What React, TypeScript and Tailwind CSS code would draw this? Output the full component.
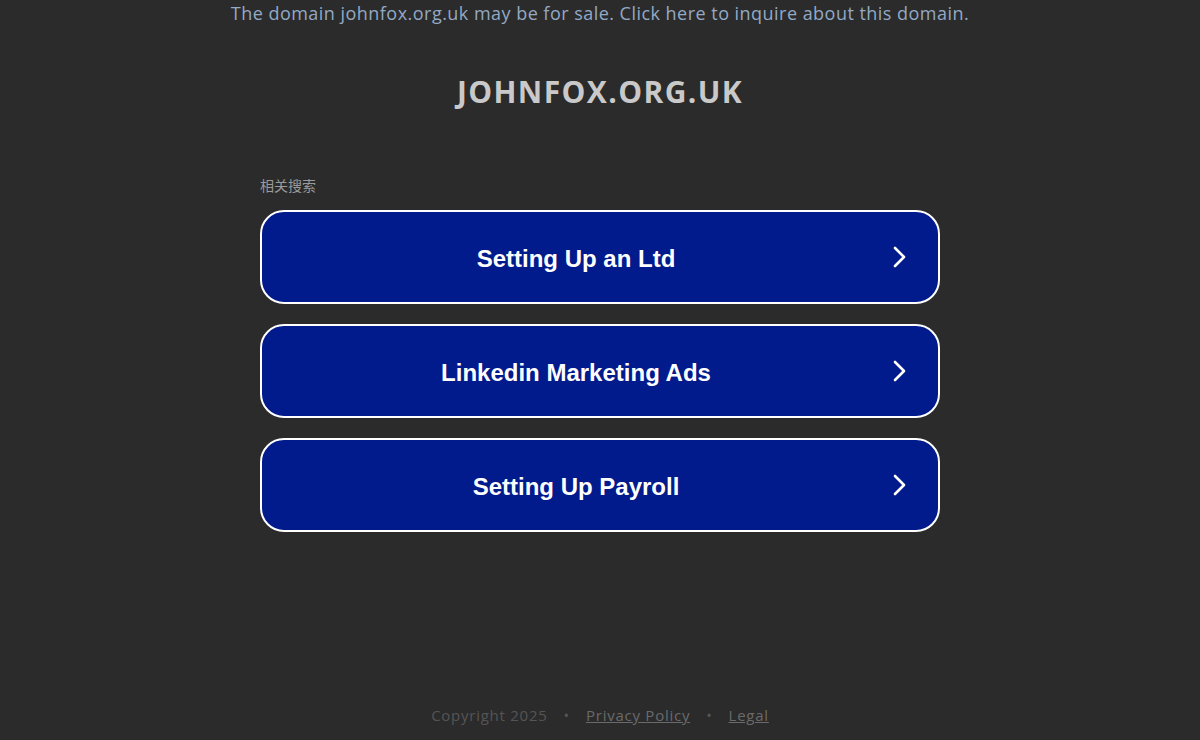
import React from "react";

const items = ["Setting Up an Ltd", "Linkedin Marketing Ads", "Setting Up Payroll"];

function Chevron() {
  return (
    <svg width="16" height="24" viewBox="0 0 16 24" fill="none" className="shrink-0">
      <path d="M3 3 L12 12 L3 21" stroke="white" strokeWidth="2.6" strokeLinecap="round" strokeLinejoin="round" />
    </svg>
  );
}

export default function App() {
  return (
    <div className="w-[1200px] h-[740px] bg-[#2b2b2b] flex flex-col items-center overflow-hidden" style={{ fontFamily: "'Open Sans', 'Noto Sans', sans-serif" }}>
      <div className="pt-[2px] text-[18px] leading-[22px] text-[#93a9c4] tracking-[0.47px]">
        The domain johnfox.org.uk may be for sale. Click here to inquire about this domain.
      </div>
      <h1 className="mt-[50px] text-[30px] leading-[36px] font-bold text-[#c9c9c9] tracking-[1.4px]">JOHNFOX.ORG.UK</h1>
      <div className="mt-[66px] w-[680px] flex flex-col">
        <div className="text-[14px] leading-[18px] text-[#9a9a9a] mb-[16px]" style={{ fontFamily: "'Noto Sans CJK SC', sans-serif" }}>相关搜索</div>
        <div className="flex flex-col gap-[20px]">
          {items.map((t) => (
            <div key={t} className="h-[94px] rounded-[24px] border-2 border-white bg-[#011a8c] flex items-center pr-[30px]">
              <div className="flex-1 text-center text-white font-bold text-[24px] pt-[3px] pr-[2px]" style={{ fontFamily: "'Liberation Sans', Arial, sans-serif" }}>{t}</div>
              <Chevron />
            </div>
          ))}
        </div>
      </div>
      <div className="mt-auto mb-[14px] text-[15px] leading-[22px] text-[#555555] flex items-center gap-[16px] tracking-[0.75px]">
        <span>Copyright 2025</span>
        <span>•</span>
        <span className="underline text-[#6a6a6a]">Privacy Policy</span>
        <span>•</span>
        <span className="underline text-[#6a6a6a]">Legal</span>
      </div>
    </div>
  );
}
